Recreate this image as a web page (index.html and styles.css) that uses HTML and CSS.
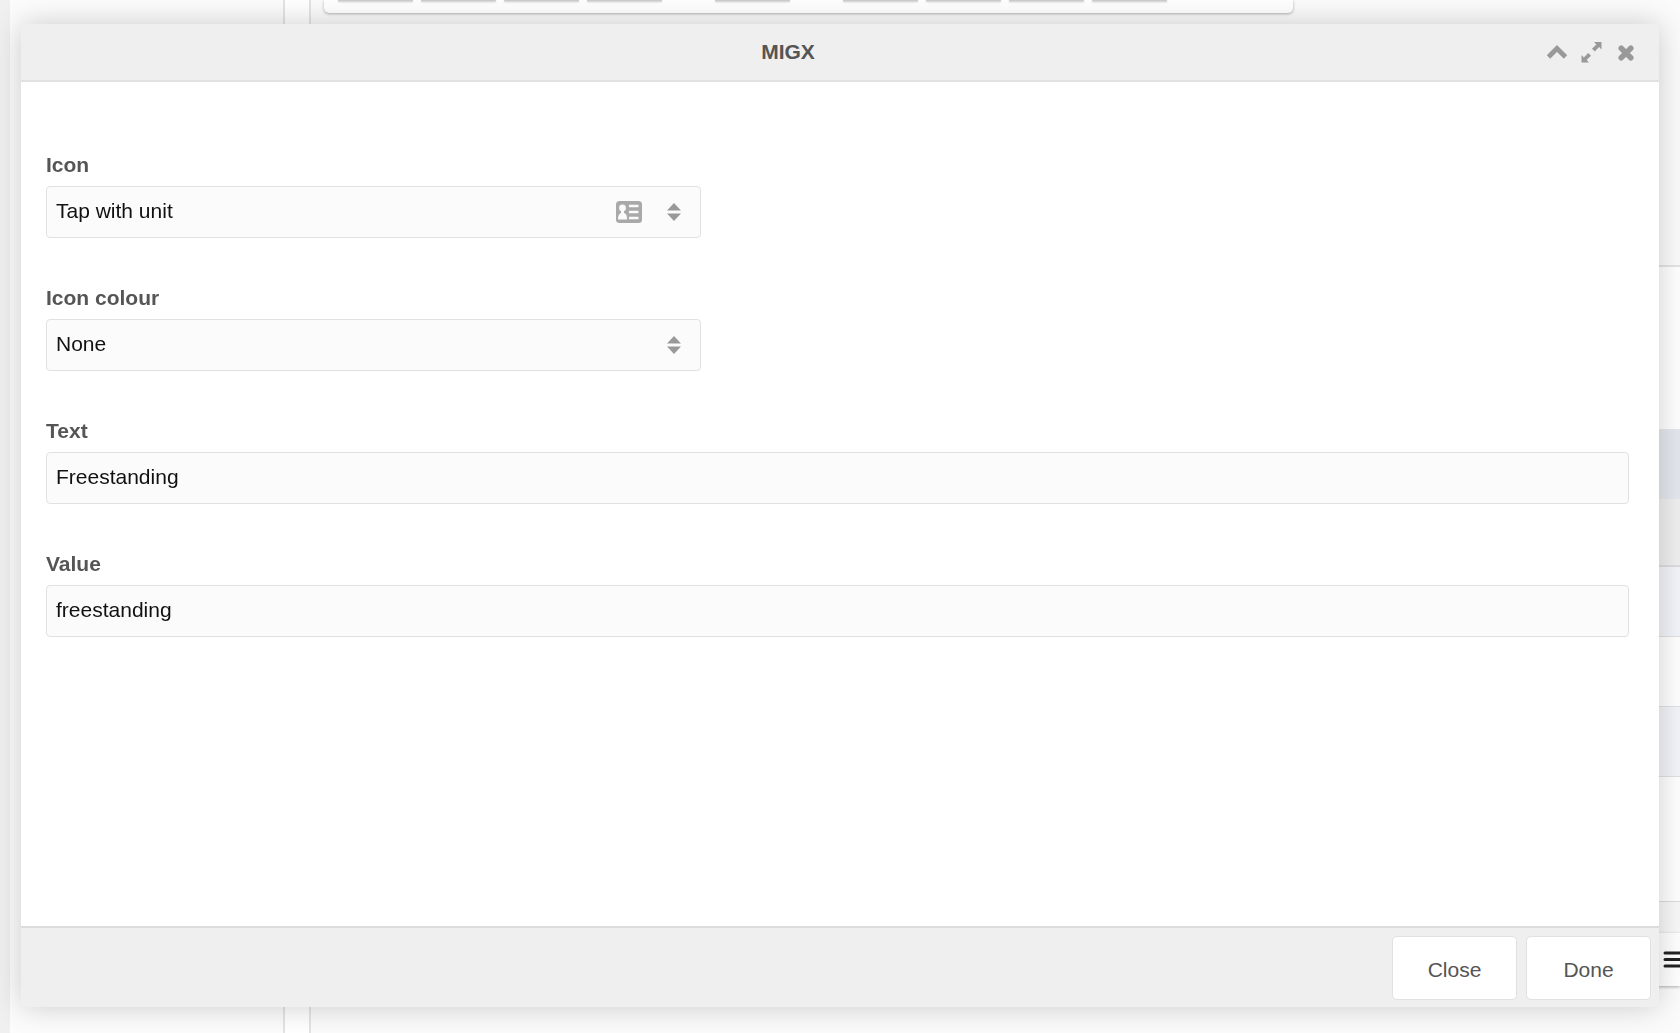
FILE: index.html
```
<!DOCTYPE html>
<html lang="en">
<head>
  <meta charset="utf-8">
  <title>MIGX</title>
  <link rel="stylesheet" href="styles.css">
</head>
<body>
  <div class="page">
    <div class="tree"></div>
    <div class="main">
      <div class="main-top">
        <div class="toolbar">
          <button type="button"></button>
          <button type="button"></button>
          <button type="button"></button>
          <button type="button"></button>
          <button type="button" class="group"></button>
          <button type="button" class="group"></button>
          <button type="button"></button>
          <button type="button"></button>
          <button type="button"></button>
        </div>
      </div>
      <div class="grid">
        <div class="grid-bar"></div>
        <div class="grid-head"></div>
        <div class="grid-filter"></div>
        <div class="grid-row alt"></div>
        <div class="grid-row"></div>
        <div class="grid-row alt"></div>
      </div>
      <div class="spacer"></div>
      <div class="actions">
        <svg width="24" height="18" viewBox="0 0 24 18"><path d="M2 2h22M2 8.500h22M2 15h22" stroke="#222" stroke-width="3" stroke-linecap="round"/></svg>
      </div>
    </div>
  </div>

  <div class="window" role="dialog" aria-labelledby="window-title">
    <div class="window-header">
      <h2 id="window-title">MIGX</h2>
      <div class="tools">
        <button type="button" aria-label="Collapse">
          <svg width="22" height="22" viewBox="0 0 22 22"><path d="M3.500 16L12 7.500L20.500 16" fill="none" stroke="#999" stroke-width="4.800" stroke-linecap="butt"/></svg>
        </button>
        <button type="button" aria-label="Maximize">
          <svg width="22" height="22" viewBox="0 0 22 22"><path d="M14 1h7.500v7.500l-2.400-2.400-4.300 4.400-2.800-2.800 4.400-4.300zM1.500 21.500V14l2.400 2.400 4.300-4.400 2.800 2.800-4.400 4.300L9 21.500z" fill="#999"/></svg>
        </button>
        <button type="button" aria-label="Close window">
          <svg width="22" height="22" viewBox="0 0 22 22"><path d="M6.200 7.200L15.800 16.800M15.800 7.200L6.200 16.800" stroke="#999" stroke-width="5.500" stroke-linecap="round"/></svg>
        </button>
      </div>
    </div>

    <form class="window-body" id="migx-form">
      <div class="field">
        <label for="icon">Icon</label>
        <div class="combo">
          <select id="icon">
            <option>Tap with unit</option>
          </select>
          <span class="triggers">
            <svg width="28" height="24" viewBox="0 0 28 24">
              <rect x="1" y="1" width="26" height="22" rx="3.500" fill="#a9a9a9"/>
              <circle cx="7.500" cy="8" r="3.400" fill="#fafafa"/>
              <path d="M6 10h3v3c2 .8 3 2.400 3 6.500H3c0-4.100 1-5.700 3-6.500z" fill="#fafafa"/>
              <path d="M14 6h9.500M14 12h9.500M14 18h9.500" stroke="#fafafa" stroke-width="2.600"/>
            </svg>
            <svg width="14" height="20" viewBox="0 0 14 20"><path d="M0 8.500L7 1l7 7.500zM0 11.500L7 19l7-7.500z" fill="#999"/></svg>
          </span>
        </div>
      </div>
      <div class="field">
        <label for="colour">Icon colour</label>
        <div class="combo">
          <select id="colour">
            <option>None</option>
          </select>
          <span class="triggers">
            <svg width="14" height="20" viewBox="0 0 14 20"><path d="M0 8.500L7 1l7 7.500zM0 11.500L7 19l7-7.500z" fill="#999"/></svg>
          </span>
        </div>
      </div>
      <div class="field">
        <label for="text">Text</label>
        <input type="text" id="text" value="Freestanding">
      </div>
      <div class="field">
        <label for="value">Value</label>
        <input type="text" id="value" value="freestanding">
      </div>
    </form>

    <div class="window-footer">
      <button type="button">Close</button>
      <button type="submit" form="migx-form">Done</button>
    </div>
  </div>
</body>
</html>
```
FILE: styles.css
```
* {
  box-sizing: border-box;
}

body {
  margin: 0;
  font-family: "Helvetica Neue", "Liberation Sans", Arial, sans-serif;
  font-size: 21px;
  line-height: 24px;
  color: #555;
  background-color: #fff;
}

button,
input,
select {
  font: inherit;
}

svg {
  display: block;
}

/* Manager page behind the window */
.page {
  display: flex;
  gap: 24px;
  height: 100vh;
  border-left: 10px solid #f0f0f0;
  overflow: hidden;
}

.tree {
  flex: 0 0 275px;
  background-color: #fcfcfc;
  border-right: 2px solid #e4e4e4;
}

.main {
  flex: 1;
  display: flex;
  flex-direction: column;
  background-color: #fbfbfb;
  border-left: 2px solid #e4e4e4;
}

.main-top {
  height: 267px;
  padding-left: 13px;
  border-bottom: 2px solid #e4e4e4;
}

.toolbar {
  display: flex;
  gap: 8px;
  width: 969px;
  height: 13px;
  padding: 0 14px;
  background-color: #fff;
  border-radius: 0 0 5px 5px;
  box-shadow: 0 1px 3px rgba(0, 0, 0, 0.3);
}

.toolbar button {
  width: 75px;
  height: 1px;
  padding: 0;
  border: none;
  background-color: #ccc;
  box-shadow: 0 1px 2px rgba(0, 0, 0, 0.3);
}

.toolbar .group {
  margin-left: 45px;
}

.grid {
  background-color: #fff;
}

.grid-bar {
  height: 162px;
}

.grid-head {
  height: 70px;
  background-color: #e4e8ee;
}

.grid-filter {
  height: 68px;
  background-color: #efefef;
  border-bottom: 2px solid #ddd;
}

.grid-row {
  height: 70px;
  border-bottom: 1px solid #e1e1e1;
}

.grid-row.alt {
  background-color: #f3f4f9;
}

.spacer {
  height: 156px;
  background-color: #fff;
  border-bottom: 31px solid #f8f8f8;
  box-shadow: inset 0 -1px #ddd;
}

.actions {
  display: flex;
  align-items: center;
  justify-content: flex-end;
  height: 53px;
  background-color: #fff;
  box-shadow: 0 1px 3px rgba(0, 0, 0, 0.3);
}

.actions svg {
  margin-right: -7px;
}

/* Window */
.window {
  position: fixed;
  top: 24px;
  right: 21px;
  bottom: 26px;
  left: 21px;
  display: flex;
  flex-direction: column;
  background-color: #fff;
  border-radius: 3px;
  box-shadow: 0 0 30px rgba(0, 0, 0, 0.2);
}

.window-header {
  display: flex;
  align-items: center;
  gap: 12px;
  height: 58px;
  padding: 0 22px;
  background-color: #efefef;
  border-bottom: 2px solid #e1e1e1;
}

.window-header h2 {
  flex: 1;
  margin: 0;
  font-size: 21px;
  text-align: center;
}

.tools {
  display: flex;
  gap: 13px;
}

.tools button {
  padding: 0;
  border: none;
  background: none;
  cursor: pointer;
}

.window-body {
  flex: 1;
  display: flex;
  flex-direction: column;
  gap: 48px;
  padding: 71px 30px 30px 25px;
  overflow: auto;
}

.field label {
  display: block;
  margin-bottom: 9px;
  font-weight: bold;
}

.field input,
.field select {
  display: block;
  width: 100%;
  height: 52px;
  padding: 0 9px 2px;
  color: #111;
  background-color: #fbfbfb;
  border: 1px solid #e1e1e1;
  border-radius: 4px;
  appearance: none;
}

.combo {
  position: relative;
  width: 655px;
  max-width: 100%;
}

.triggers {
  position: absolute;
  top: 0;
  right: 20px;
  bottom: 0;
  display: flex;
  align-items: center;
  gap: 24px;
  pointer-events: none;
}

.window-footer {
  display: flex;
  justify-content: flex-end;
  gap: 9px;
  padding: 8px 8px 7px;
  background-color: #efefef;
  border-top: 2px solid #dcdcdc;
}

.window-footer button {
  width: 125px;
  height: 64px;
  padding: 4px 0 0;
  color: #555;
  background-color: #fff;
  border: 1px solid #e1e1e1;
  border-radius: 5px;
  cursor: pointer;
}
```
